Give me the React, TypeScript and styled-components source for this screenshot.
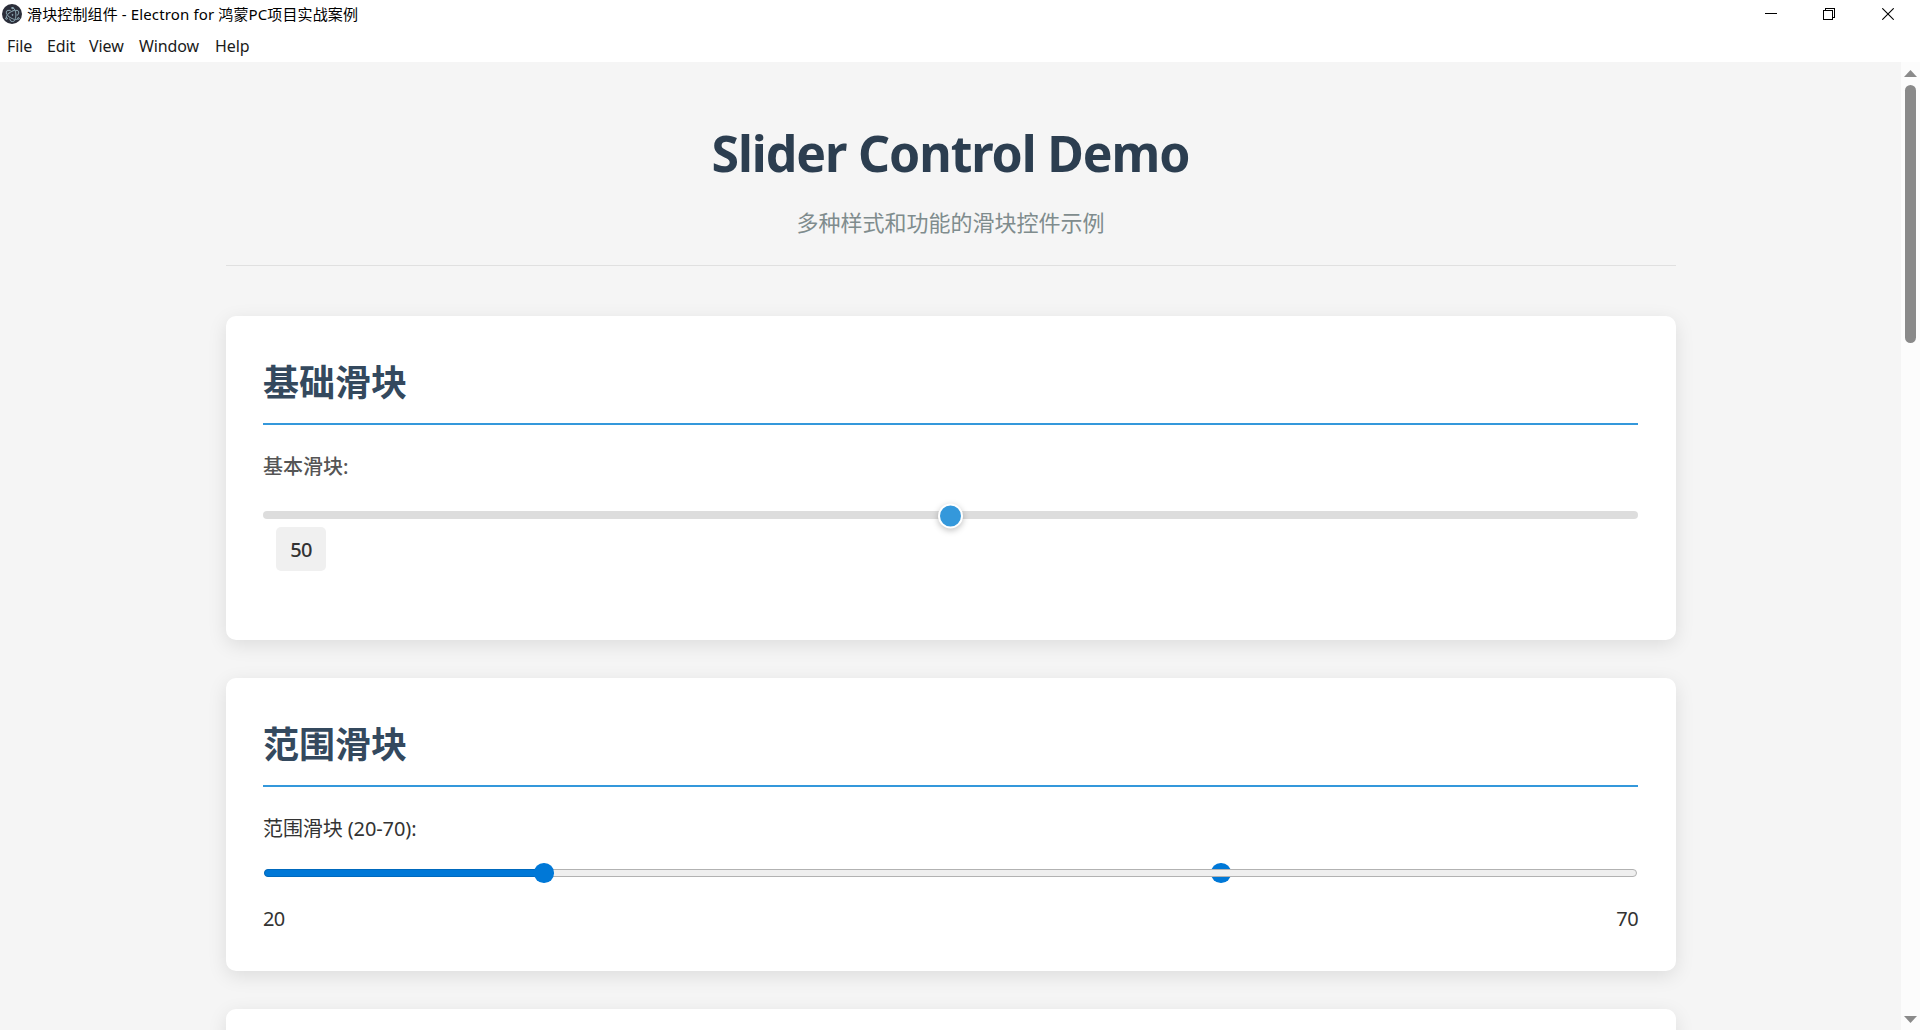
import React, { useState } from 'react'
import styled, { createGlobalStyle } from 'styled-components'
import { SiElectron } from 'react-icons/si'

const MENUS = [
  { name: 'File', width: 25 },
  { name: 'Edit', width: 27 },
  { name: 'View', width: 35 },
  { name: 'Window', width: 61 },
  { name: 'Help', width: 34 },
]

const App: React.FC = () => {
  const [value, setValue] = useState(50)
  const range = { low: 20, high: 70 }

  return (
    <Window>
      <GlobalStyle />
      <TitleBar>
        <AppIcon>
          <SiElectron size={15} />
        </AppIcon>
        <WindowTitle>滑块控制组件 - Electron for 鸿蒙PC项目实战案例</WindowTitle>
        <WindowButtons>
          <svg width="12" height="12" viewBox="0 0 12 12" shapeRendering="crispEdges">
            <path d="M0 5.5H12" stroke="#000" />
          </svg>
          <svg width="12" height="12" viewBox="0 0 12 12" fill="none" shapeRendering="crispEdges">
            <path d="M0.5 2.5H9.5V11.5H0.5ZM2.5 2.5V0.5H11.5V9.5H9.5" stroke="#000" />
          </svg>
          <svg width="12" height="12" viewBox="0 0 12 12">
            <path d="M0.3 0.3L11.7 11.7M11.7 0.3L0.3 11.7" stroke="#000" strokeWidth="1.1" />
          </svg>
        </WindowButtons>
      </TitleBar>
      <MenuBar>
        {MENUS.map((menu) => (
          <MenuItem key={menu.name} $width={menu.width}>{menu.name}</MenuItem>
        ))}
      </MenuBar>
      <Body>
        <Page>
          <Container>
            <Header>
              <Title>Slider Control Demo</Title>
              <Subtitle>多种样式和功能的滑块控件示例</Subtitle>
            </Header>

            <Card $height={324}>
              <SectionTitle>基础滑块</SectionTitle>
              <Label $strong>基本滑块:</Label>
              <Slider
                type="range"
                min={0}
                max={100}
                value={value}
                onChange={(e) => setValue(Number(e.target.value))}
              />
              <ValueBox>{value}</ValueBox>
            </Card>

            <Card $height={293}>
              <SectionTitle>范围滑块</SectionTitle>
              <Label>范围滑块 (20-70):</Label>
              <RangeSlider>
                <RangeThumb style={{ left: `calc(${range.high}% - 14.5px)` }} />
                <RangeTrack />
                <RangeFill style={{ width: `calc(${range.low}% + 5px)` }} />
                <RangeThumb style={{ left: `calc(${range.low}% - 3.75px)` }} />
              </RangeSlider>
              <RangeValues>
                <span>{range.low}</span>
                <span>{range.high}</span>
              </RangeValues>
            </Card>

            <Card $height={300} />
          </Container>
        </Page>
        <Scrollbar>
          <svg width="13" height="7" viewBox="0 0 13 7">
            <path d="M6.5 0L13 7H0Z" fill="#8a8a8a" />
          </svg>
          <ScrollThumb />
          <svg width="13" height="7" viewBox="0 0 13 7">
            <path d="M0 0H13L6.5 7Z" fill="#8a8a8a" />
          </svg>
        </Scrollbar>
      </Body>
    </Window>
  )
}

const GlobalStyle = createGlobalStyle`
  * {
    box-sizing: border-box;
  }

  body {
    margin: 0;
    overflow: hidden;
    font-family: "Noto Sans", "Noto Sans CJK SC", sans-serif;
    color: #333;
  }
`

const Window = styled.div`
  display: flex;
  flex-direction: column;
  height: 100vh;
  background-color: #fff;
`

const TitleBar = styled.div`
  display: flex;
  align-items: center;
  flex: none;
  height: 28px;
  padding: 0 26px 0 2px;
`

const AppIcon = styled.div`
  display: flex;
  align-items: center;
  justify-content: center;
  width: 20px;
  height: 20px;
  border-radius: 50%;
  background-color: #2b2e3a;
  color: #a5c6d0;

  svg {
    stroke: #a5c6d0;
    stroke-width: 0.5;
  }
`

const WindowTitle = styled.span`
  margin-left: 5px;
  font-size: 15px;
  line-height: 28px;
  letter-spacing: 0.13px;
  white-space: nowrap;
  color: #000;
`

const WindowButtons = styled.div`
  display: flex;
  gap: 47px;
  margin-left: auto;

  svg {
    display: block;
  }

  svg:first-child {
    margin-right: -1px;
  }
`

const MenuBar = styled.div`
  display: flex;
  flex: none;
  gap: 15px;
  height: 34px;
  padding-left: 7px;
`

const MenuItem = styled.span<{ $width: number }>`
  width: ${(props) => props.$width}px;
  font-size: 16px;
  line-height: 37px;
  letter-spacing: -0.1px;
  white-space: nowrap;
  color: #1a1a1a;
`

const Body = styled.div`
  display: flex;
  flex: 1;
  min-height: 0;
`

const Page = styled.main`
  flex: 1;
  overflow: hidden;
  padding: 25px;
  background-color: #f5f5f5;
`

const Container = styled.div`
  width: 1450px;
  margin: 0 auto;
`

const Header = styled.header`
  height: 179px;
  margin-bottom: 50px;
  padding-top: 24px;
  border-bottom: 1px solid #e0e0e0;
  text-align: center;
`

const Title = styled.h1`
  margin: 0;
  font-size: 50px;
  font-weight: 700;
  line-height: 84px;
  letter-spacing: -1.1px;
  color: #2c3e50;
`

const Subtitle = styled.p`
  margin: 9px 0 0;
  font-size: 22px;
  line-height: 36px;
  color: #7f8c8d;
`

const Card = styled.section<{ $height: number }>`
  height: ${(props) => props.$height}px;
  margin-bottom: 38px;
  padding: 37.5px;
  border-radius: 10px;
  background-color: #fff;
  box-shadow: 0 5px 19px rgba(0, 0, 0, 0.1);
`

const SectionTitle = styled.h2`
  height: 71.5px;
  margin: 0 0 25px;
  border-bottom: 2px solid #3498db;
  font-size: 36px;
  font-weight: 700;
  line-height: 58px;
  color: #34495e;
`

const Label = styled.label<{ $strong?: boolean }>`
  display: block;
  font-size: 20px;
  font-weight: ${(props) => (props.$strong ? 500 : 400)};
  line-height: 33px;
  letter-spacing: ${(props) => (props.$strong ? 0 : '-0.1px')};
  color: ${(props) => (props.$strong ? '#555' : '#333')};
`

const Slider = styled.input`
  display: block;
  width: 100%;
  height: 8px;
  margin: 28px 0 8px;
  border-radius: 4px;
  background-color: #ddd;
  appearance: none;
  outline: none;

  &::-webkit-slider-thumb {
    width: 25px;
    height: 25px;
    border: 2px solid #fff;
    border-radius: 50%;
    background-color: #3498db;
    box-shadow: 0 2px 6px rgba(0, 0, 0, 0.25);
    transform: translateY(0.5px);
    appearance: none;
    cursor: pointer;
  }
`

const ValueBox = styled.span`
  display: block;
  width: 50px;
  height: 44px;
  margin-left: 13px;
  border-radius: 5px;
  background-color: #f0f0f0;
  font-size: 20px;
  font-weight: 500;
  line-height: 45px;
  letter-spacing: -0.8px;
  text-align: center;
`

const RangeSlider = styled.div`
  position: relative;
  display: flex;
  align-items: center;
  height: 20px;
  margin-top: 18px;
  padding: 0 1px;
`

const RangeTrack = styled.div`
  position: relative;
  width: 100%;
  height: 8px;
  border: 1px solid #b2b2b2;
  border-radius: 4px;
  background-color: #efefef;
`

const RangeFill = styled.div`
  position: absolute;
  left: 1px;
  height: 8px;
  border: 1px solid #0069bd;
  border-radius: 4px;
  background-color: #0078d7;
`

const RangeThumb = styled.div`
  position: absolute;
  width: 19.5px;
  height: 19.5px;
  border-radius: 50%;
  background-color: #0078d7;
`

const RangeValues = styled.div`
  display: flex;
  justify-content: space-between;
  margin-top: 19.5px;
  font-size: 20px;
  line-height: 32px;
  letter-spacing: -0.6px;
`

const Scrollbar = styled.div`
  display: flex;
  flex-direction: column;
  align-items: center;
  width: 19px;
  padding: 8px 0 7px;
  background-color: #fcfcfc;

  svg:last-child {
    margin-top: auto;
  }
`

const ScrollThumb = styled.div`
  width: 11px;
  height: 258px;
  margin-top: 8px;
  border-radius: 6px;
  background-color: #8a8a8a;
`

export default App
